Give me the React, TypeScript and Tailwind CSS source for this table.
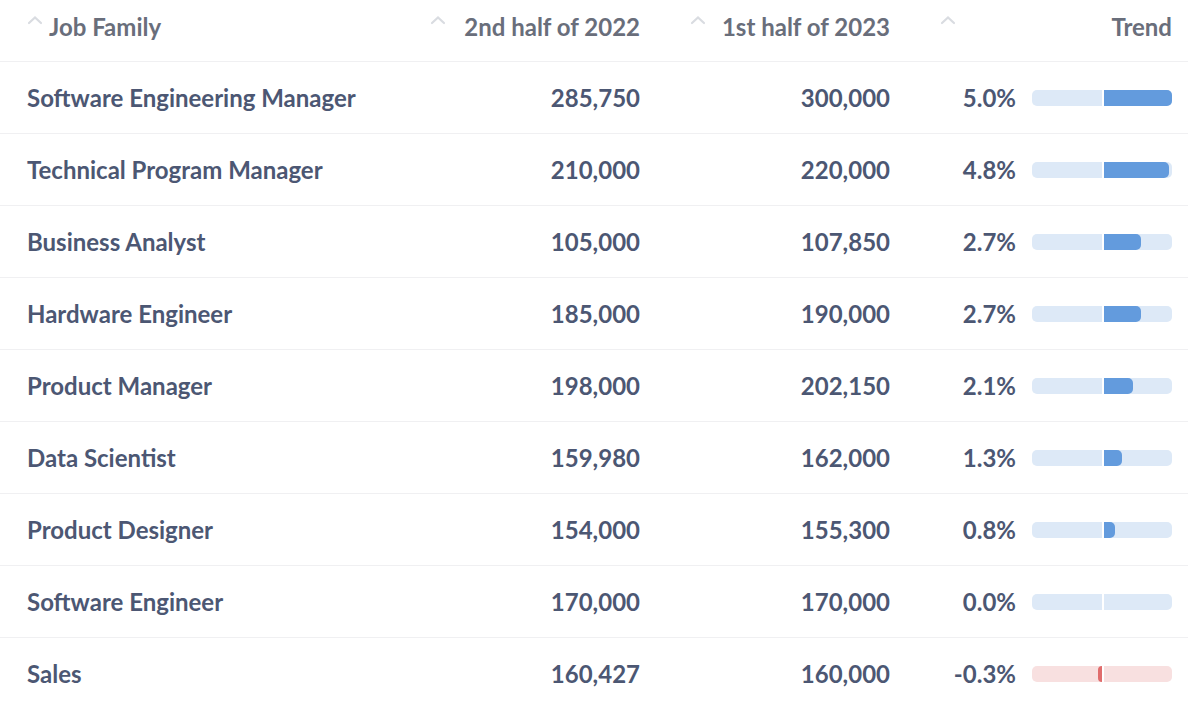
import React from "react";

type Row = {
  name: string;
  prev: string;
  curr: string;
  trend: number;
};

const rows: Row[] = [
  { name: "Software Engineering Manager", prev: "285,750", curr: "300,000", trend: 5.0 },
  { name: "Technical Program Manager", prev: "210,000", curr: "220,000", trend: 4.8 },
  { name: "Business Analyst", prev: "105,000", curr: "107,850", trend: 2.7 },
  { name: "Hardware Engineer", prev: "185,000", curr: "190,000", trend: 2.7 },
  { name: "Product Manager", prev: "198,000", curr: "202,150", trend: 2.1 },
  { name: "Data Scientist", prev: "159,980", curr: "162,000", trend: 1.3 },
  { name: "Product Designer", prev: "154,000", curr: "155,300", trend: 0.8 },
  { name: "Software Engineer", prev: "170,000", curr: "170,000", trend: 0.0 },
  { name: "Sales", prev: "160,427", curr: "160,000", trend: -0.3 },
];

const MAX = 5.0;

const Caret = () => (
  <svg width="16" height="10" viewBox="0 0 16 10" className="shrink-0 self-start mt-[3px]">
    <path d="M2 8 L8 2.5 L14 8" fill="none" stroke="#d9dce1" strokeWidth="2.2" strokeLinecap="round" />
  </svg>
);

const TrendBar = ({ value }: { value: number }) => {
  const neg = value < 0;
  const half = 70;
  const w = Math.min(Math.abs(value) / MAX, 1) * (neg ? half : 68);
  return (
    <div className="flex h-4 w-[140px]">
      <div className={`relative h-full w-[70px] rounded-l-[5px] ${neg ? "bg-[#f8e0e0]" : "bg-[#dde9f7]"}`}>
        {neg && (
          <div
            className="absolute right-0 top-0 h-full rounded-l-[4px] bg-[#e06c6c]"
            style={{ width: w }}
          />
        )}
      </div>
      <div className="w-[2px] h-full bg-white" />
      <div className={`relative h-full w-[68px] rounded-r-[5px] ${neg ? "bg-[#f8e0e0]" : "bg-[#dde9f7]"}`}>
        {!neg && w > 0 && (
          <div
            className="absolute left-0 top-0 h-full rounded-r-[5px] bg-[#639bdd]"
            style={{ width: w }}
          />
        )}
      </div>
    </div>
  );
};

const App = () => {
  return (
    <div className="w-[1188px] h-[704px] overflow-hidden bg-white font-['Lato','Noto_Sans',sans-serif] font-bold">
      {/* header */}
      <div className="grid grid-cols-[396px_260px_250px_282px] h-[62px] border-b border-[#f0f0f2] text-[24px] text-[#696e7b]">
        <div className="flex items-start pt-[12px] pl-[27px]">
          <Caret />
          <span className="ml-[6px] leading-[30px]">Job Family</span>
        </div>
        <div className="flex items-start pt-[12px] pl-[34px] pr-4">
          <Caret />
          <span className="ml-auto leading-[30px]">2nd half of 2022</span>
        </div>
        <div className="flex items-start pt-[12px] pl-[34px] pr-4">
          <Caret />
          <span className="ml-auto leading-[30px]">1st half of 2023</span>
        </div>
        <div className="flex items-start pt-[12px] pl-[34px] pr-4">
          <Caret />
          <span className="ml-auto leading-[30px]">Trend</span>
        </div>
      </div>

      {rows.map((r) => (
        <div
          key={r.name}
          className="grid grid-cols-[396px_260px_250px_282px] h-[72px] border-b border-[#f0f0f2] text-[24px] text-[#4c5773]"
        >
          <div className="flex items-center pl-[27px]">{r.name}</div>
          <div className="flex items-center justify-end pr-4">{r.prev}</div>
          <div className="flex items-center justify-end pr-4">{r.curr}</div>
          <div className="flex items-center justify-end gap-4 pr-4">
            <span>{r.trend.toFixed(1)}%</span>
            <TrendBar value={r.trend} />
          </div>
        </div>
      ))}
    </div>
  );
};

export default App;
